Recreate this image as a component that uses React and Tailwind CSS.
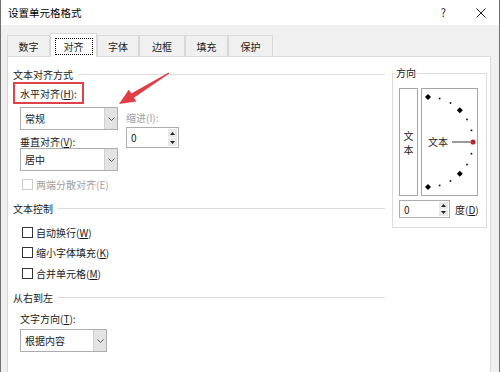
import React from 'react';

const Chevron = () => (
  <svg width="7" height="4" viewBox="0 0 7 4">
    <path d="M0.5 0.5 L3.5 3.5 L6.5 0.5" fill="none" stroke="#5a5a5a" strokeWidth="1" />
  </svg>
);

const Select = ({ value, className }) => (
  <div className={`flex h-[23px] border border-[#adadad] bg-white ${className}`}>
    <div className="flex-1 flex items-center pl-[4px]">{value}</div>
    <div className="w-[13px] flex items-center justify-center bg-[#e3e3e3] border-l border-[#d0d0d0]">
      <Chevron />
    </div>
  </div>
);

const Spin = ({ className }) => (
  <div className={`flex border border-[#adadad] bg-white ${className}`}>
    <div className="flex-1 flex items-center pl-[4px]">0</div>
    <div className="w-[11px] flex flex-col gap-px p-px">
      <div className="flex-1 bg-[#e8e8e8] flex items-center justify-center">
        <svg width="5" height="3" viewBox="0 0 5 3"><polygon points="2.5,0 5,3 0,3" fill="#222" /></svg>
      </div>
      <div className="flex-1 bg-[#e8e8e8] flex items-center justify-center">
        <svg width="5" height="3" viewBox="0 0 5 3"><polygon points="0,0 5,0 2.5,3" fill="#222" /></svg>
      </div>
    </div>
  </div>
);

const Header = ({ title, className = '' }) => (
  <div className={`h-[14px] flex items-center ${className}`}>
    <span>{title}</span>
    <div className="ml-[5px] flex-1 h-px bg-[#dcdcdc]" />
  </div>
);

const Check = ({ label, className = '', disabled }) => (
  <div className={`h-[14px] flex items-center ml-[9px] ${className}`}>
    <div className={`w-[11px] h-[11px] border bg-white ${disabled ? 'border-[#cccccc]' : 'border-[#333333]'}`} />
    <span className={`ml-[3px] ${disabled ? 'text-[#a0a0a0]' : ''}`}>{label}</span>
  </div>
);

const Dial = () => {
  const cx = 6;
  const cy = 53;
  const r = 45;
  const angles = [90, 75, 60, 45, 30, 15, 0, -15, -30, -45, -60, -75, -90];
  return (
    <svg width="55" height="106" viewBox="0 0 55 106">
      {angles.map((a) => {
        const x = cx + r * Math.cos((a * Math.PI) / 180);
        const y = cy - r * Math.sin((a * Math.PI) / 180);
        if (a === 0) return <circle key={a} cx={x} cy={y} r="2.6" fill="#b3262c" />;
        if (a % 45 === 0)
          return <polygon key={a} points={`${x},${y - 3} ${x + 3},${y} ${x},${y + 3} ${x - 3},${y}`} fill="#000" />;
        return <rect key={a} x={x - 0.8} y={y - 0.8} width="1.6" height="1.6" fill="#000" />;
      })}
      <line x1="30" y1="53" x2="48" y2="53" stroke="#333" strokeWidth="1" />
      <text x="6" y="57" fontSize="10" fill="#222" fontFamily="Noto Sans CJK SC, sans-serif">文本</text>
    </svg>
  );
};

const tabs = [
  { name: '数字', w: 'w-[43px]' },
  { name: '对齐', w: 'w-[47px]', active: true },
  { name: '字体', w: 'w-[42px]' },
  { name: '边框', w: 'w-[46px]' },
  { name: '填充', w: 'w-[43px]' },
  { name: '保护', w: 'w-[45px]' },
];

export default function App() {
  return (
    <div className="relative w-[500px] h-[372px] overflow-hidden bg-[#f0f0f0] border-x border-[#707070] text-[10px] text-[#1a1a1a] font-['Noto_Sans_CJK_SC',sans-serif]">
      {/* Title bar */}
      <div className="h-[25px] bg-white flex items-center pl-[7px]">
        <span className="text-[10.5px] text-black">设置单元格格式</span>
        <span className="ml-auto text-[11px] text-[#222] mr-[30px]">?</span>
        <svg className="mr-[13px]" width="10" height="10" viewBox="0 0 10 10">
          <path d="M0.5 0.5 L9.5 9.5 M9.5 0.5 L0.5 9.5" stroke="#222" strokeWidth="1" />
        </svg>
      </div>

      {/* Tabs */}
      <div className="relative z-10 h-[31px] flex items-end pl-[6px]">
        {tabs.map((t) =>
          t.active ? (
            <div key={t.name} className={`${t.w} h-[24px] -mb-px bg-white border border-b-0 border-[#d9d9d9] flex items-start justify-center pt-[4px]`}>
              <span className="h-[17px] px-[8px] flex items-center border border-dotted border-black">{t.name}</span>
            </div>
          ) : (
            <div key={t.name} className={`${t.w} h-[21px] border border-b-0 border-[#d9d9d9] flex items-center justify-center`}>
              {t.name}
            </div>
          )
        )}
      </div>

      {/* Panel */}
      <div className="ml-[6px] w-[484px] h-[330px] bg-white border border-[#d9d9d9] flex pl-[5px]">
        {/* Left column */}
        <div className="w-[372px] flex flex-col pt-[10px]">
          <Header title="文本对齐方式" />
          <div className="mt-[1px] w-[71px] h-[22px] border-2 border-[#e0424b] flex items-center pl-[5px]">
            水平对齐(<span className="underline">H</span>):
          </div>
          <div className="flex ml-[7px] mt-[3px]">
            <div className="flex flex-col w-[98px]">
              <Select value="常规" />
              <div className="h-[13px] mt-[5px] flex items-center">
                垂直对齐(<span className="underline">V</span>):
              </div>
              <Select value="居中" />
            </div>
            <div className="flex flex-col ml-[8px] pt-[3px]">
              <div className="h-[14px] flex items-center text-[#a0a0a0]">缩进(I):</div>
              <Spin className="mt-[3px] w-[53px] h-[21px]" />
            </div>
          </div>
          <Check label="两端分散对齐(E)" disabled className="mt-[6px]" />
          <Header title="文本控制" className="mt-[10px]" />
          <Check label={<>自动换行(<span className="underline">W</span>)</>} className="mt-[10px]" />
          <Check label={<>缩小字体填充(<span className="underline">K</span>)</>} className="mt-[6px]" />
          <Check label={<>合并单元格(<span className="underline">M</span>)</>} className="mt-[7px]" />
          <Header title="从右到左" className="mt-[10px]" />
          <div className="h-[14px] mt-[7px] ml-[7px] flex items-center">
            文字方向(<span className="underline">T</span>):
          </div>
          <Select value="根据内容" className="mt-[4px] ml-[7px] w-[87px]" />
        </div>

        {/* Right column: 方向 */}
        <div className="ml-[7px] pt-[16px]">
          <div className="relative w-[95px] h-[155px] border border-[#dcdcdc] pt-[14px] pl-[6px]">
            <span className="absolute -top-[8px] left-[2px] bg-white px-px leading-[14px]">方向</span>
            <div className="flex gap-[3px]">
              <div className="w-[19px] h-[108px] border border-[#a6a6a6] flex flex-col items-center justify-center leading-[14px] pt-[2px]">
                <span>文</span>
                <span>本</span>
              </div>
              <div className="w-[57px] h-[108px] border border-[#a6a6a6]">
                <Dial />
              </div>
            </div>
            <div className="flex items-center mt-[4px]">
              <Spin className="w-[51px] h-[18px]" />
              <span className="ml-[5px]">度(<span className="underline">D</span>)</span>
            </div>
          </div>
        </div>
      </div>

      {/* Red arrow annotation */}
      <svg className="absolute left-0 top-0 pointer-events-none" width="500" height="372">
        <polygon
          points="167.7,72.6 130.3,93.5 127.9,89.6 118,104 135.3,101.5 132.9,97.7 168.3,73.4"
          fill="#e23c45"
        />
      </svg>
    </div>
  );
}
